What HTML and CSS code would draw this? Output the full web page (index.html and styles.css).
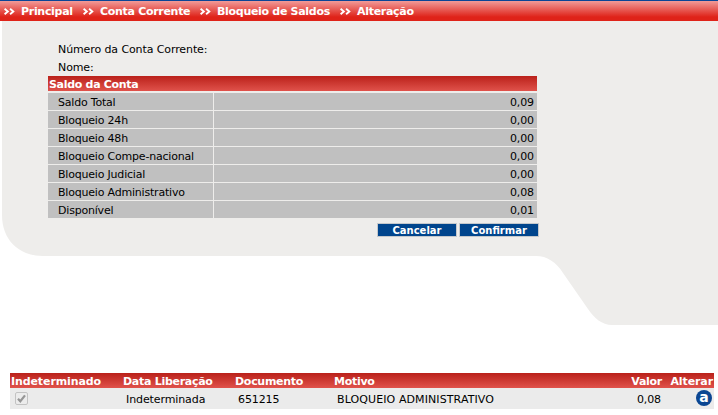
FILE: index.html
```html
<!DOCTYPE html>
<html lang="pt-BR">
<head>
<meta charset="utf-8">
<title>Bloqueio de Saldos</title>
<link rel="stylesheet" href="styles.css">
</head>
<body>
<svg class="defs" width="0" height="0"><symbol id="chev" viewBox="0 0 11 7"><path d="M.6.8 3.8 3.5.6 6.2M6.1.8 9.3 3.5 6.1 6.2" fill="none" stroke="#fff" stroke-width="1.9"/></symbol></svg>
<nav class="crumbs">
  <span class="crumb"><svg class="chev"><use href="#chev"/></svg><b>Principal</b></span>
  <span class="crumb"><svg class="chev"><use href="#chev"/></svg><b>Conta Corrente</b></span>
  <span class="crumb"><svg class="chev"><use href="#chev"/></svg><b>Bloqueio de Saldos</b></span>
  <span class="crumb"><svg class="chev"><use href="#chev"/></svg><b>Alteração</b></span>
</nav>
<main class="panel">
  <div class="form">
    <div class="field">Número da Conta Corrente:</div>
    <div class="field">Nome:</div>
    <h2 class="bar">Saldo da Conta</h2>
    <div class="balances">
      <span>Saldo Total</span><span class="num">0,09</span>
      <span>Bloqueio 24h</span><span class="num">0,00</span>
      <span>Bloqueio 48h</span><span class="num">0,00</span>
      <span>Bloqueio Compe-nacional</span><span class="num">0,00</span>
      <span>Bloqueio Judicial</span><span class="num">0,00</span>
      <span>Bloqueio Administrativo</span><span class="num">0,08</span>
      <span>Disponível</span><span class="num">0,01</span>
    </div>
    <div class="actions"><button>Cancelar</button><button>Confirmar</button></div>
  </div>
</main>
<section class="list">
  <div class="row head"><span class="wide">Indeterminado</span><span>Data Liberação</span><span>Documento</span><span>Motivo</span><span class="right">Valor</span><span class="right wide">Alterar</span></div>
  <div class="row item">
    <span class="check"><svg width="13" height="13" viewBox="0 0 13 13"><rect x=".5" y=".5" width="12" height="12" rx="1.5" fill="#ececec" stroke="#c3c3c3"/><path d="M3 6.8 5.3 9.3 10 3.4" fill="none" stroke="#969696" stroke-width="2.2"/></svg></span>
    <span>Indeterminada</span><span>651215</span><span class="reason">BLOQUEIO ADMINISTRATIVO</span><span class="right">0,08</span>
    <span class="edit"><i>a</i></span>
  </div>
</section>
</body>
</html>
```
FILE: styles.css
```css
* { box-sizing: border-box; }
body { margin: 0; width: 718px; height: 415px; overflow: hidden; background: #fff; color: #000; font: 11px/18px "DejaVu Sans", Verdana, sans-serif; letter-spacing: -0.1px; }
.defs { position: absolute; }
.crumbs { height: 21px; border-top: 1px solid #0a4596; background: linear-gradient(#f19b98, #df2319 80%, #df2319); display: grid; grid-template-columns: 79px 117px 140px auto; padding-left: 4px; color: #fff; line-height: 20px; }
.crumb { display: flex; align-items: flex-start; white-space: nowrap; }
.crumb b { letter-spacing: -0.3px; padding-top: 1px; }
.chev { width: 11px; height: 7px; margin-right: 6px; margin-top: 7px; flex: none; }
.panel { height: 304px; margin-left: 2px; padding: 19px 0 0 46px; background: #eeedeb; clip-path: path("M0 0H716V304H610C600 304 592 297 586 288L561 252C554 241 545 235 534 235H41C16 235 0 218 0 194Z"); }
.form { width: 491px; }
.field { height: 18px; padding-left: 10px; line-height: 20px; }
.bar { margin: 0; width: 489px; height: 15px; padding-left: 1px; font-size: 11px; line-height: 17px; letter-spacing: -0.3px; color: #fff; background: linear-gradient(#ba211a, #e0524b); }
.balances { width: 489px; margin-top: 2px; display: grid; grid-template-columns: 165px 323px; gap: 1px; grid-auto-rows: 17px; letter-spacing: -0.2px; }
.balances span { background: #c0c0c0; padding-left: 10px; line-height: 19px; white-space: nowrap; }
.balances .num { text-align: right; padding-right: 3px; letter-spacing: -0.1px; }
.actions { display: flex; justify-content: flex-end; gap: 2px; margin-top: 5px; }
.actions button { width: 80px; height: 14px; padding: 1px 0 0; border: 1px solid #c4c8cc; background: #00458d; color: #fff; font: bold 10px/12px "DejaVu Sans", sans-serif; }
.list { margin: 48px 4px 0 10px; }
.row { display: grid; grid-template-columns: 112px 112px 99px 245px 83px 51px; white-space: nowrap; }
.head { height: 15px; padding-left: 1px; line-height: 17px; font-weight: bold; letter-spacing: -0.28px; color: #fff; background: linear-gradient(#ba211a, #e0524b); }
.wide { letter-spacing: -0.1px; }
.item { height: 21px; padding-left: 4px; line-height: 23px; background: #ebebeb; }
.right { text-align: right; }
.item .right { padding-right: 4px; }
.reason { letter-spacing: 0.1px; }
.check { padding: 4px 0 0 1px; line-height: 0; }
.edit { padding: 2px 4px 0 0; display: flex; justify-content: flex-end; }
.edit i { width: 16px; height: 16px; border-radius: 50%; background: #0b4692; color: #fff; font: bold 14px/14px "DejaVu Sans", sans-serif; text-align: center; letter-spacing: 0; }
```
